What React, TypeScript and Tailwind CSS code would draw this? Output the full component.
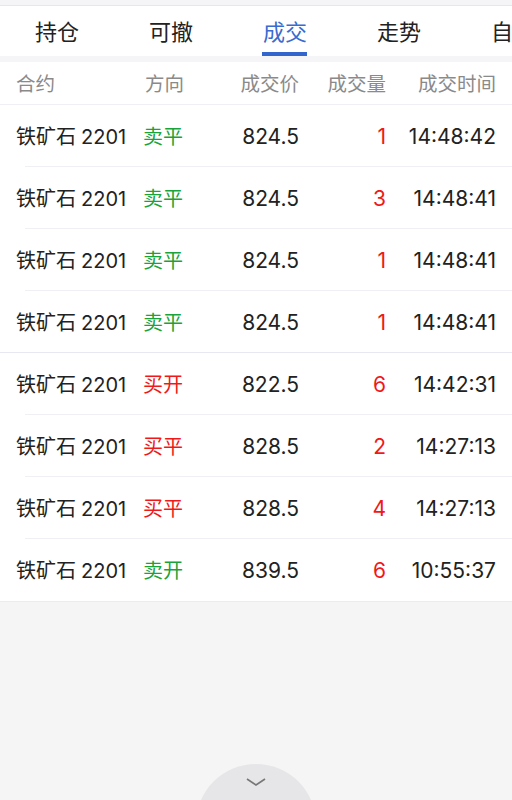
import React from "react";

const rows = [
  { dir: "卖平", dirColor: "text-[#1aa33a]", price: "824.5", qty: "1", time: "14:48:42" },
  { dir: "卖平", dirColor: "text-[#1aa33a]", price: "824.5", qty: "3", time: "14:48:41" },
  { dir: "卖平", dirColor: "text-[#1aa33a]", price: "824.5", qty: "1", time: "14:48:41" },
  { dir: "卖平", dirColor: "text-[#1aa33a]", price: "824.5", qty: "1", time: "14:48:41" },
  { dir: "买开", dirColor: "text-[#f01818]", price: "822.5", qty: "6", time: "14:42:31" },
  { dir: "买平", dirColor: "text-[#f01818]", price: "828.5", qty: "2", time: "14:27:13" },
  { dir: "买平", dirColor: "text-[#f01818]", price: "828.5", qty: "4", time: "14:27:13" },
  { dir: "卖开", dirColor: "text-[#1aa33a]", price: "839.5", qty: "6", time: "10:55:37" },
];

const tabs = ["持仓", "可撤", "成交", "走势", "自选"];

const num = { fontFamily: "Inter,'Noto Sans CJK SC',sans-serif" };

export default function App() {
  return (
    <div
      className="relative w-[512px] h-[800px] overflow-hidden bg-[#f5f5f5]"
      style={{ fontFamily: "'Noto Sans CJK SC',sans-serif" }}
    >
      <div className="h-[6px] bg-[#f5f5f7] border-b border-[#e6e6ee]" />
      <div className="flex h-[50px] bg-white whitespace-nowrap">
        {tabs.map((t, i) => (
          <div key={t} className="relative w-[114px] shrink-0 flex items-center justify-center">
            <span className={`text-[22px] leading-none pb-[3px] ${i === 2 ? "text-[#3a6bd0]" : "text-[#222]"}`}>{t}</span>
            {i === 2 && <div className="absolute bottom-0 left-[34px] w-[45px] h-[4px] bg-[#3366cc]" />}
          </div>
        ))}
      </div>
      <div className="h-[6px] bg-[#f5f5f7]" />
      <div className="bg-white">
        <div className="flex items-center h-[43px] text-[19.5px] leading-none text-[#8a8a8a] border-b border-[#f0f0f4] whitespace-nowrap">
          <div className="w-[145px] pl-[16px]">合约</div>
          <div className="w-[80px]">方向</div>
          <div className="w-[74px] text-right">成交价</div>
          <div className="w-[87px] text-right">成交量</div>
          <div className="w-[110px] text-right">成交时间</div>
        </div>
        {rows.map((r, i) => (
          <div key={i} className="relative flex items-center h-[62px] text-[20px] leading-none text-[#222]">
            <div className="w-[143px] pl-[16px] whitespace-nowrap">
              铁矿石<span className="ml-[5px]" style={num}>2201</span>
            </div>
            <div className={`w-[82px] ${r.dirColor}`}>{r.dir}</div>
            <div className="w-[74px] text-right text-[21px]" style={num}>{r.price}</div>
            <div className="w-[87px] text-right text-[21px] text-[#f01818]" style={num}>{r.qty}</div>
            <div className="w-[110px] text-right text-[21px]" style={num}>{r.time}</div>
            {i < rows.length - 1 && (
              <div className={`absolute bottom-0 right-0 h-px ${i === 3 ? "left-0 bg-[#e8e8f2]" : "left-[25px] bg-[#f0f0f4]"}`} />
            )}
          </div>
        ))}
      </div>
      <div className="h-px bg-[#ececec]" />
      <div className="absolute left-[196px] top-[764px] w-[120px] h-[120px] rounded-full bg-[#e6e6e8] flex justify-center">
        <svg width="20" height="10" viewBox="0 0 20 10" className="mt-[14px]">
          <path d="M1 1 L10 7 L19 1" fill="none" stroke="#777" strokeWidth="1.6" />
        </svg>
      </div>
    </div>
  );
}
